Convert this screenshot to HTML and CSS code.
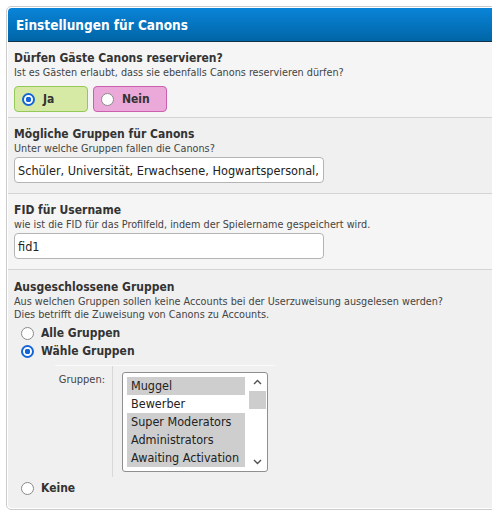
FILE: index.html
```html
<!DOCTYPE html>
<html lang="de">
<head>
<meta charset="utf-8">
<title>Einstellungen für Canons</title>
<link rel="stylesheet" href="styles.css">
</head>
<body>
<div class="wrapper">
  <div class="title">Einstellungen für Canons</div>

  <div class="row row-a">
    <div class="label">Dürfen Gäste Canons reservieren?</div>
    <div class="desc">Ist es Gästen erlaubt, dass sie ebenfalls Canons reservieren dürfen?</div>
    <div class="yesno">
      <label class="choice yes"><input type="radio" class="rb" name="guests" checked> Ja</label>
      <label class="choice no"><input type="radio" class="rb" name="guests"> Nein</label>
    </div>
  </div>

  <div class="row row-b">
    <div class="label">Mögliche Gruppen für Canons</div>
    <div class="desc">Unter welche Gruppen fallen die Canons?</div>
    <input class="text" type="text" value="Schüler, Universität, Erwachsene, Hogwartspersonal, Ministerium">
  </div>

  <div class="row row-a">
    <div class="label">FID für Username</div>
    <div class="desc">wie ist die FID für das Profilfeld, indem der Spielername gespeichert wird.</div>
    <input class="text" type="text" value="fid1">
  </div>

  <div class="row row-b last">
    <div class="label">Ausgeschlossene Gruppen</div>
    <div class="desc">Aus welchen Gruppen sollen keine Accounts bei der Userzuweisung ausgelesen werden?<br>Dies betrifft die Zuweisung von Canons zu Accounts.</div>
    <label class="opt first"><input type="radio" class="rb" name="excl"> Alle Gruppen</label>
    <label class="opt"><input type="radio" class="rb" name="excl" checked> Wähle Gruppen</label>
    <div class="groups">
      <div class="glabel">Gruppen:</div>
      <div class="gfield">
        <div class="listbox">
          <div class="options">
            <div class="option sel">Muggel</div>
            <div class="option">Bewerber</div>
            <div class="option sel">Super Moderators</div>
            <div class="option sel">Administrators</div>
            <div class="option sel">Awaiting Activation</div>
          </div>
          <div class="scrollbar">
            <svg class="arrow" width="17" height="17" viewBox="0 0 17 17"><path d="M5 10 L8.5 6.5 L12 10" fill="none" stroke="#505050" stroke-width="1.4"/></svg>
            <div class="thumb"></div>
            <div class="track"></div>
            <svg class="arrow" width="17" height="17" viewBox="0 0 17 17"><path d="M5 7 L8.5 10.5 L12 7" fill="none" stroke="#505050" stroke-width="1.4"/></svg>
          </div>
        </div>
      </div>
    </div>
    <label class="opt keine"><input type="radio" class="rb" name="excl"> Keine</label>
  </div>
</div>
</body>
</html>
```

FILE: styles.css
```css
html {
  overflow: hidden;
}
body {
  margin: 0;
  background: #fff;
  font-family: "DejaVu Sans Condensed", "DejaVu Sans", sans-serif;
  font-stretch: condensed;
  color: #333;
}
.wrapper {
  margin: 6px 0 0 6px;
  width: 600px;
  height: 504px;
  box-sizing: border-box;
  border: 1px solid #ccc;
  border-radius: 5px;
  padding: 1px;
  display: flex;
  flex-direction: column;
}
.title {
  flex: none;
  height: 34px;
  box-sizing: border-box;
  padding: 0 8px 0;
  display: flex;
  align-items: center;
  background: linear-gradient(#0a84d8, #0065a6);
  border-bottom: 1px solid #12334a;
  border-radius: 4px 4px 0 0;
  color: #fff;
  font-weight: bold;
  font-size: 13.5px;
}
.row {
  flex: none;
  padding: 8px 6px 10px;
  border-bottom: 1px solid #d4d4d4;
}
.row-a { background: #f5f5f5; }
.row-b { background: #f0f0f0; }
.row.last {
  flex: 1;
  padding-top: 9px;
  border-bottom: none;
  border-radius: 0 0 4px 4px;
}
.label {
  font-weight: bold;
  font-size: 12px;
  line-height: 16px;
  color: #333;
}
.desc {
  font-size: 10.75px;
  line-height: 13px;
  color: #444;
}
.yesno {
  display: flex;
  gap: 5px;
  margin-top: 7px;
  margin-bottom: -5px;
}
.choice {
  width: 74px;
  height: 26px;
  box-sizing: border-box;
  border-radius: 4px;
  display: flex;
  align-items: center;
  padding-left: 7px;
  gap: 8px;
  font-weight: bold;
  font-size: 12px;
  color: #333;
}
.choice.yes {
  background: #d6eaa6;
  border: 1px solid #94c95a;
}
.choice.no {
  background: #eaa9d8;
  border: 1px solid #cc5fae;
}
.rb {
  appearance: none;
  -webkit-appearance: none;
  margin: 0;
  width: 13px;
  height: 13px;
  border-radius: 50%;
  border: 1.5px solid #8a8a8a;
  background: #fff;
  box-sizing: border-box;
  flex: none;
}
.rb:checked {
  border: 2px solid #1565d8;
  background: radial-gradient(circle, #1565d8 0 2.6px, #fff 3px);
}
.text {
  display: block;
  margin-top: 2px;
  width: 310px;
  height: 26px;
  box-sizing: border-box;
  border: 1px solid #b4b4b4;
  border-radius: 4px;
  padding: 0 3px;
  background: #fff;
  font-family: inherit;
  font-stretch: condensed;
  font-size: 12.6px;
  color: #222;
}
.opt {
  display: flex;
  align-items: center;
  gap: 7px;
  padding-left: 7px;
  height: 18px;
  font-weight: bold;
  font-size: 12px;
  color: #333;
}
.opt.first {
  margin-top: 3px;
}
.groups {
  display: flex;
  margin-left: 41px;
  width: 220px;
  border-top: 1px solid #fafafa;
  margin-top: 5px;
}
.glabel {
  width: 58px;
  box-sizing: border-box;
  text-align: right;
  padding: 7px 7px 0 0;
  font-size: 11px;
  color: #444;
  border-right: 1px solid #d8d8d8;
}
.gfield {
  padding: 6px 0 5px 9px;
}
.listbox {
  width: 146px;
  height: 100px;
  box-sizing: border-box;
  border: 1px solid #8f8f8f;
  border-radius: 3px;
  background: #fff;
  display: flex;
  padding: 4px 1px 3px 4px;
}
.options {
  flex: 1;
  font-size: 12.5px;
}
.option {
  height: 18px;
  line-height: 18px;
  padding-left: 4px;
  color: #222;
}
.option.sel {
  background: #cecece;
}
.scrollbar {
  width: 17px;
  margin-top: -3px;
  margin-bottom: -2px;
  margin-left: 4px;
  display: flex;
  flex-direction: column;
}
.arrow {
  display: block;
  flex: none;
}
.thumb {
  height: 18px;
  background: #cdcdcd;
}
.track {
  flex: 1;
}
.opt.keine {
  margin-top: 2px;
}
```
